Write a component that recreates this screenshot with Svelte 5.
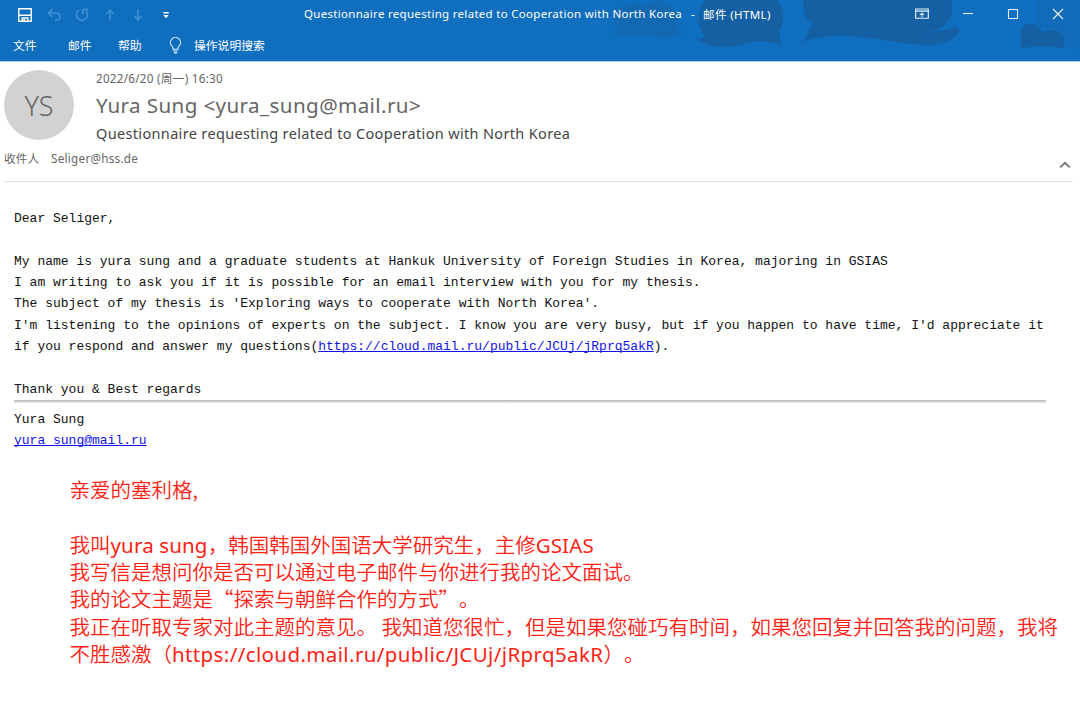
<script lang="ts">
	type Part = { text: string; latin?: boolean; url?: boolean };

	const subject = "Questionnaire requesting related to Cooperation with North Korea";
	const tabs = ["文件", "邮件", "帮助"];

	const letter = [
		"Dear Seliger,",
		"",
		"My name is yura sung and a graduate students at Hankuk University of Foreign Studies in Korea, majoring in GSIAS",
		"I am writing to ask you if it is possible for an email interview with you for my thesis.",
		"The subject of my thesis is 'Exploring ways to cooperate with North Korea'.",
		"I'm listening to the opinions of experts on the subject. I know you are very busy, but if you happen to have time, I'd appreciate it",
	];

	const translation: Part[][] = [
		[{ text: "亲爱的塞利格," }],
		[],
		[{ text: "我叫" }, { text: "yura sung", latin: true }, { text: "，韩国韩国外国语大学研究生，主修" }, { text: "GSIAS", latin: true }],
		[{ text: "我写信是想问你是否可以通过电子邮件与你进行我的论文面试。" }],
		[{ text: "我的论文主题是“探索与朝鲜合作的方式”。" }],
		[{ text: "我正在听取专家对此主题的意见。 我知道您很忙，但是如果您碰巧有时间，如果您回复并回答我的问题，我将" }],
		[{ text: "不胜感激（" }, { text: "https://cloud.mail.ru/public/JCUj/jRprq5akR", latin: true, url: true }, { text: "）。" }],
	];
</script>

<div class="window">
	<header>
		<svg class="clouds" width="480" height="61" viewBox="600 0 480 61">
			<path d="M613 37 Q617 32 616 26 Q611 15 621 7 Q630 0 642 5 Q660 -4 672 7 Q682 17 677 28 Q676 32 682 31 Q677 39 661 38 Q635 32 613 37Z" fill="#1368b2" />
			<path d="M695 36 Q703 42 704 36 Q693 17 705 0 H777 Q788 17 779 31 Q780 42 783 46 Q768 39 748 43 Q710 54 695 36Z" fill="#1560a3" />
			<path d="M804 42 Q808 30 813 24 Q801 16 804 0 H951 Q956 19 938 30 Q925 34 911 33 Q942 33 953 27 Q962 27 958 33 Q948 45 926 45 C886 44 843 27 804 42Z" fill="#1560a3" />
			<path d="M977 33 Q985 5 998 0 H1036 Q1044 12 1038 25 Q1022 23 1017 39 L977 33Z" fill="#106fc2" />
			<path d="M1036 0 H1080 V49 Q1064 43 1050 47 V29 L1036 26Z" fill="#126bb8" />
			<path d="M1020 48 L1022 41 Q1017 27 1028 24 Q1038 22 1042 32 Q1058 28 1063 35 Q1067 44 1062 48 Q1045 45 1020 48Z" fill="#1560a3" />
		</svg>
		<div class="titlebar">
			<div class="quick">
				<svg class="save" width="14" height="14" viewBox="0 0 14 14">
					<path d="M.8 .8 H13.2 V13.2 H.8Z M1 7.3 H13 M4.2 13 V10 H9.8 V13" fill="none" stroke="#fff" stroke-width="1.4" />
					<path d="M5.4 11 h1.8 v2 h-1.8z" fill="#fff" />
				</svg>
				<svg class="faded" width="14" height="14" viewBox="0 0 14 14">
					<path d="M5.5 1.2 L1.2 5 L5.5 8.8 M1.2 5 H9 Q13 5 13 8.5 Q13 12.3 8 12.3" />
				</svg>
				<svg class="faded" width="14" height="14" viewBox="0 0 14 14">
					<path d="M4 2.2 A5.5 5.5 0 1 0 10.5 2.6 M7.8 6 V1.5 H13" />
				</svg>
				<svg class="faded" width="14" height="14" viewBox="0 0 14 14">
					<path d="M7 12.8 V2.5 M3.3 6 L7 2.2 L10.7 6" />
				</svg>
				<svg class="faded" width="14" height="14" viewBox="0 0 14 14">
					<path d="M7 1.2 V11.5 M3.3 8 L7 11.8 L10.7 8" />
				</svg>
				<svg width="14" height="14" viewBox="0 0 14 14" fill="#fff">
					<path d="M4.3 4 h5.4 v1.4 h-5.4z M4.3 7 h5.4 L7 10.3Z" />
				</svg>
			</div>
			<div class="title">
				<span class="title-subject">{subject}</span>
				<span>-</span>
				<span class="title-kind">邮件 (HTML)</span>
			</div>
			<div class="controls">
				<svg width="14" height="12" viewBox="0 0 14 12">
					<path d="M.7 1 H13.3 V10.3 H.7Z M1 3.1 H13 M7 9 V4.5 M4.8 6.4 H9.2" />
				</svg>
				<svg width="12" height="12" viewBox="0 0 12 12"><path d="M1 5.5 H11" /></svg>
				<svg width="12" height="12" viewBox="0 0 12 12"><path d="M1.5 1.5 H10.5 V10.5 H1.5Z" /></svg>
				<svg width="12" height="12" viewBox="0 0 12 12"><path d="M1 1 L11 11 M11 1 L1 11" /></svg>
			</div>
		</div>
		<nav>
			{#each tabs as tab}
				<span class="tab">{tab}</span>
			{/each}
			<svg class="bulb" width="13" height="17" viewBox="0 0 13 17">
				<path d="M4 12.2 V11 Q3.8 9.8 2.4 8.6 A5.1 5.1 0 1 1 10.6 8.6 Q9.2 9.8 9 11 V12.2Z M4.3 14 H8.7 M5 15.9 H8" />
			</svg>
			<span>操作说明搜索</span>
		</nav>
	</header>

	<section class="sender">
		<div class="avatar">YS</div>
		<div class="meta">
			<div class="date">2022/6/20 (周一) 16:30</div>
			<div class="from">Yura Sung &lt;yura_sung@mail.ru&gt;</div>
			<div class="subject">{subject}</div>
		</div>
	</section>
	<div class="recipients">
		<span class="to">收件人</span>
		<span class="address">Seliger@hss.de</span>
		<svg class="collapse" width="12" height="8" viewBox="0 0 12 8">
			<path d="M1.2 6.4 L6 1.8 L10.8 6.4" />
		</svg>
	</div>

	<article>
		{#each letter as line}
			<div class="line">{line}</div>
		{/each}
		<div class="line">if you respond and answer my questions(<span class="link">https://cloud.mail.ru/public/JCUj/jRprq5akR</span>).</div>
		<div class="line"></div>
		<div class="line">Thank you &amp; Best regards</div>
		<hr />
		<div class="line">Yura Sung</div>
		<div class="line"><span class="link">yura_sung@mail.ru</span></div>
	</article>

	<div class="translation">
		{#each translation as parts}
			<div class="row">{#each parts as part}<span class:latin={part.latin} class:url={part.url}>{part.text}</span>{/each}</div>
		{/each}
	</div>
</div>

<style>
:global(body) {
	margin: 0;
	background: #fff;
}
.window {
	width: 1080px;
	height: 717px;
	overflow: hidden;
	background: #fff;
	font-family: "Noto Sans", "Noto Sans CJK SC", sans-serif;
	white-space: nowrap;
}
svg {
	display: block;
	flex: none;
}
header {
	position: relative;
	height: 62px;
	box-sizing: border-box;
	background: #106ebe;
	border-bottom: 1px solid #a9cbe8;
	color: #fff;
}
.clouds {
	position: absolute;
	right: 0;
	top: 0;
}
.titlebar {
	position: relative;
	display: grid;
	grid-template-columns: 304px 1fr auto;
	align-items: center;
	height: 28px;
	font-size: 11.5px;
	letter-spacing: .3px;
}
.quick {
	display: flex;
	gap: 14px;
	padding: 2px 0 0 18px;
}
.save {
	margin-right: 1px;
}
.faded path {
	fill: none;
	stroke: #3f8fd2;
	stroke-width: 1.7;
}
.title {
	display: flex;
	gap: 8px;
}
.title-subject {
	width: 379px;
}
.title-kind {
	letter-spacing: .4px;
}
.controls {
	display: flex;
	gap: 33px;
	padding-right: 16px;
}
.controls path {
	fill: none;
	stroke: #e8f2fa;
	stroke-width: 1.1;
}
nav {
	position: relative;
	display: flex;
	align-items: center;
	height: 33px;
	padding-left: 13px;
	font-size: 11.8px;
}
.tab {
	width: 24px;
	margin-right: 31px;
}
.tab + .tab {
	margin-right: 26px;
}
.tab:nth-child(3) {
	margin-right: 27px;
}
.bulb {
	margin: 2px 12px 0 0;
}
.bulb path {
	fill: none;
	stroke: #e8f2fa;
	stroke-width: 1.1;
}
.sender {
	display: flex;
	gap: 22px;
	height: 84px;
	padding: 8px 0 0 4px;
	box-sizing: border-box;
	color: #666;
}
.avatar {
	width: 70px;
	height: 70px;
	border-radius: 50%;
	background: #d2d2d2;
	color: #666;
	font-size: 27px;
	font-weight: 350;
	line-height: 71px;
	text-align: center;
}
.date {
	font-size: 11.7px;
	line-height: 16px;
	letter-spacing: .25px;
}
.from {
	font-size: 20.6px;
	line-height: 38px;
	letter-spacing: .39px;
}
.subject {
	color: #444;
	font-size: 14.5px;
	line-height: 18px;
	letter-spacing: .34px;
}
.recipients {
	display: flex;
	align-items: center;
	height: 35px;
	margin: 0 7px 0 4px;
	border-bottom: 1px solid #e1e1e1;
	color: #666;
	font-size: 11.7px;
}
.to,
.address {
	margin: -12px 12px 0 0;
}
.address {
	letter-spacing: .25px;
}
.collapse {
	margin: 3px 2px 0 auto;
}
.collapse path {
	fill: none;
	stroke: #777;
	stroke-width: 2;
}
article {
	height: 294px;
	padding: 26px 0 0 14px;
	box-sizing: border-box;
	color: #111;
	font-family: "Liberation Mono", monospace;
	font-size: 13px;
}
.line {
	height: 21.35px;
	line-height: 21.35px;
}
.link {
	color: #1212ee;
	text-decoration: underline;
	text-decoration-skip-ink: none;
}
hr {
	width: 1032px;
	height: 3px;
	margin: 0 0 6px;
	border: 0;
	background: linear-gradient(#b5b5b5, #ececec);
}
.translation {
	padding-left: 69.5px;
	color: #ff2114;
	font-family: "Noto Sans CJK SC", sans-serif;
	font-size: 20.5px;
	font-weight: 350;
	text-spacing-trim: space-all;
}
.row {
	height: 27.35px;
	line-height: 27.35px;
}
.latin {
	font-family: "Noto Sans", sans-serif;
	font-weight: 400;
	letter-spacing: .15px;
}
.url {
	letter-spacing: .38px;
}
</style>
